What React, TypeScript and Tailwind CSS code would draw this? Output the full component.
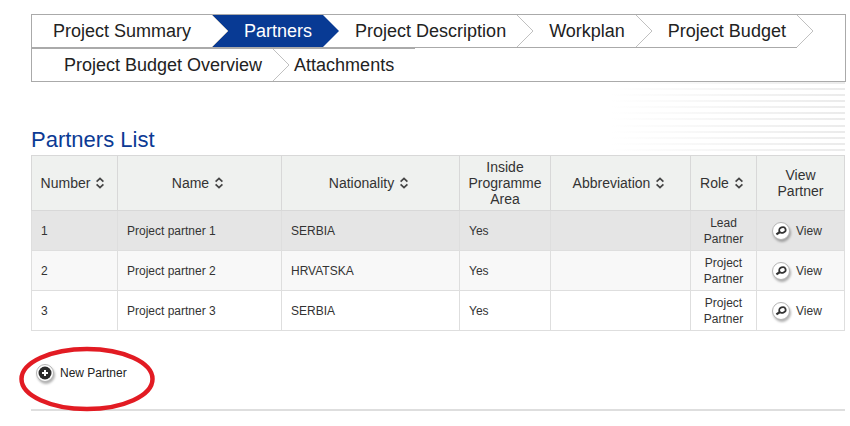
import React from 'react';
import clsx from 'clsx';

interface Step {
  label: string;
  active?: boolean;
}

interface Partner {
  id: number;
  name: string;
  nationality: string;
  inside: string;
  abbreviation: string;
  role: string;
}

const steps: Step[] = [
  { label: 'Project Summary' },
  { label: 'Partners', active: true },
  { label: 'Project Description' },
  { label: 'Workplan' },
  { label: 'Project Budget' },
  { label: 'Project Budget Overview' },
  { label: 'Attachments' },
];

const columns = [
  { title: 'Number', sortable: true, width: 'w-[86px]' },
  { title: 'Name', sortable: true, width: 'w-[164px]' },
  { title: 'Nationality', sortable: true, width: 'w-[178px]' },
  { title: 'Inside Programme Area', sortable: false, width: 'w-[91px]' },
  { title: 'Abbreviation', sortable: true, width: 'w-[140px]' },
  { title: 'Role', sortable: true, width: 'w-[66px]' },
  { title: 'View Partner', sortable: false, width: 'w-[88px]' },
];

const partners: Partner[] = [
  { id: 1, name: 'Project partner 1', nationality: 'SERBIA', inside: 'Yes', abbreviation: '', role: 'Lead Partner' },
  { id: 2, name: 'Project partner 2', nationality: 'HRVATSKA', inside: 'Yes', abbreviation: '', role: 'Project Partner' },
  { id: 3, name: 'Project partner 3', nationality: 'SERBIA', inside: 'Yes', abbreviation: '', role: 'Project Partner' },
];

const SortIcon = () => (
  <svg width="8" height="12" viewBox="0 0 8 12" fill="none" stroke="#444" strokeWidth="1.8" className="shrink-0" aria-hidden="true">
    <path d="M0.6 4.6 4 1.4 7.4 4.6M0.6 7.4 4 10.6 7.4 7.4" />
  </svg>
);

const ViewIcon = () => (
  <svg width="24" height="24" viewBox="0 0 24 24" fill="none" className="shrink-0 drop-shadow-[1px_2px_1px_rgba(0,0,0,0.3)]" aria-hidden="true">
    <circle cx="12" cy="12" r="8.5" fill="#fff" stroke="#b4b4b4" />
    <ellipse cx="13.4" cy="11" rx="3.3" ry="2.8" transform="rotate(-20 13.4 11)" stroke="#333" strokeWidth="1.7" />
    <path d="M11 13 7.4 15.4" stroke="#333" strokeWidth="2.2" />
  </svg>
);

const PlusIcon = () => (
  <svg width="24" height="24" viewBox="0 0 24 24" className="shrink-0 drop-shadow-[1px_2px_1px_rgba(0,0,0,0.3)]" aria-hidden="true">
    <circle cx="12" cy="12" r="8.5" fill="#fff" stroke="#b4b4b4" />
    <circle cx="12" cy="12" r="6.5" fill="#2b2b2b" />
    <path d="M12 9v6M9 12h6" stroke="#fff" strokeWidth="2" />
  </svg>
);

const StepTabs = () => (
  <nav aria-label="Project sections">
    <ul className="flex flex-wrap border border-[#aaa]">
      {steps.map((step, idx) => {
        const isEdge = idx === 0 || idx === steps.length - 1;
        const isLast = idx === steps.length - 1;
        const afterWrap = idx > 4;
        return (
          <li
            key={step.label}
            className={clsx('relative', step.active && 'bg-[#083a94]', afterWrap ? 'border-t border-[#aaa]' : 'border-b border-[#aaa]')}
          >
            <a
              href="#"
              className={clsx(
                'block text-[18px] leading-8',
                isEdge ? 'px-[21px]' : 'pr-[11px] pl-8',
                step.active ? 'text-white' : 'text-[#222]'
              )}
            >
              {step.label}
            </a>
            {!isLast && (
              <svg width="17" height="32" viewBox="0 0 17 32" className="absolute top-0 left-full z-10" aria-hidden="true">
                <path d="M0 0 16 16 0 32Z" fill={step.active ? '#083a94' : '#fff'} />
                {!step.active && <path d="M0 0 16 16 0 32" fill="none" stroke="#c0c0c0" />}
              </svg>
            )}
          </li>
        );
      })}
    </ul>
  </nav>
);

const PartnersTable = () => (
  <table className="w-full table-fixed border-collapse text-xs text-[#333]">
    <thead>
      <tr className="h-[55px] bg-[#eff1ef]">
        {columns.map((col) => (
          <th key={col.title} scope="col" className={clsx('border border-[#d8d8d8] p-0 text-sm leading-4 font-normal', col.width)}>
            {col.sortable ? (
              <button className="inline-flex items-center gap-1.5 pr-1">
                {col.title}
                <SortIcon />
              </button>
            ) : (
              <span className="block px-2">{col.title}</span>
            )}
          </th>
        ))}
      </tr>
    </thead>
    <tbody>
      {partners.map((p, idx) => (
        <tr key={p.id} className={clsx('h-10', idx === 0 && 'bg-[#e5e5e5]', idx === 1 && 'bg-[#f8f8f8]')}>
          <td className="border border-[#dedede] px-[9px] py-0">{p.id}</td>
          <td className="border border-[#dedede] px-[9px] py-0">{p.name}</td>
          <td className="border border-[#dedede] px-[9px] py-0">{p.nationality}</td>
          <td className="border border-[#dedede] px-[9px] py-0">{p.inside}</td>
          <td className="border border-[#dedede] px-[9px] py-0">{p.abbreviation}</td>
          <td className="border border-[#dedede] px-[9px] py-0 text-center leading-4">{p.role}</td>
          <td className="border border-[#dedede] px-3 py-0">
            <a href="#" className="flex items-center gap-[3px]">
              <ViewIcon />
              View
            </a>
          </td>
        </tr>
      ))}
    </tbody>
  </table>
);

const App: React.FC = () => {
  return (
    <main className="bg-white pt-3.5 pr-1 pb-4 pl-[31px] font-['Liberation_Sans',Arial,sans-serif]">
      <StepTabs />

      <div className="pr-px">
        <header className="relative flex h-[73px] items-end pb-px">
          {/* faded stripes behind the heading */}
          <div className="absolute top-0 right-0 bottom-1 flex w-[235px] flex-col justify-between" aria-hidden="true">
            {Array.from({ length: 12 }, (_, i) => (
              <div key={i} className="h-[2px] bg-linear-to-r from-transparent to-[#ebebeb]" />
            ))}
          </div>
          <h1 className="text-[22px] leading-7 text-[#0b3a94]">Partners List</h1>
        </header>

        <PartnersTable />

        <div className="mt-[30px] flex h-[50px] items-start border-b-2 border-[#dedede]">
          <a href="#" className="relative ml-[2px] flex items-center text-xs text-[#222]">
            <span className="flex items-center gap-[3px]">
              <PlusIcon />
              New Partner
            </span>
            {/* hand-drawn highlight */}
            <svg width="138" height="66" viewBox="0 0 138 66" fill="none" className="absolute -top-[15px] -left-[15px] max-w-none" aria-hidden="true">
              <ellipse cx="69" cy="33" rx="65.5" ry="30" stroke="#e21b23" strokeWidth="4.5" />
            </svg>
          </a>
        </div>
      </div>
    </main>
  );
};

export default App;
